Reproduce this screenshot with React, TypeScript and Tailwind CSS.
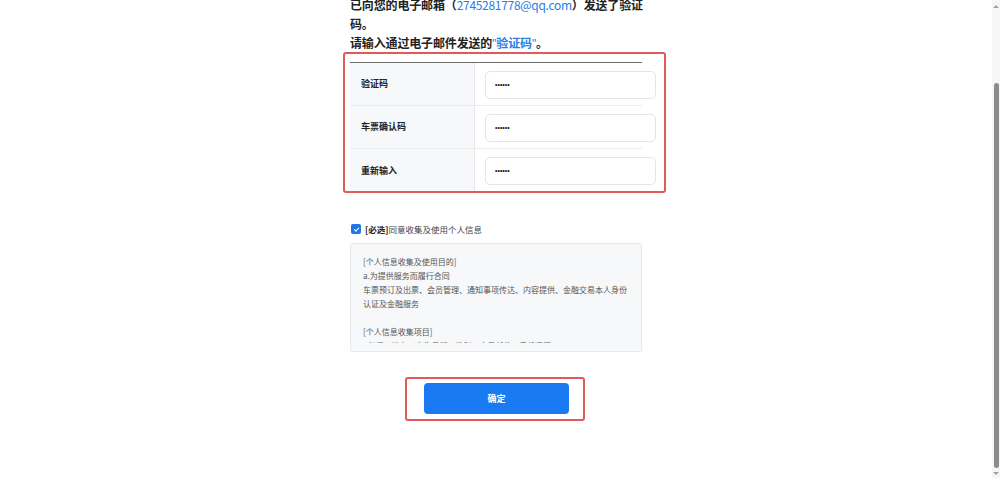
import React from "react";

const font = { fontFamily: '"Noto Sans CJK SC", "Noto Sans", sans-serif' };
const latin = { fontFamily: '"Liberation Sans", Arial, sans-serif' };

function Row({ label, last }: { label: string; last?: boolean }) {
  return (
    <div className={`flex h-[43px] ${last ? "" : "border-b border-[#ececec]"}`}>
      <div className="w-[125px] shrink-0 bg-[#f7f8fa] border-r border-[#e6e8eb] flex items-center pl-[11px] text-[9px] font-bold text-[#222]">
        {label}
      </div>
      <div className="flex-1 pl-[10px] pt-[8px]">
        <div className="w-[171px] h-[28px] rounded-[5px] border border-[#e3e5e8] bg-white flex items-center pl-[9px] text-[7px] font-bold text-[#222]" style={latin}>
          ••••••
        </div>
      </div>
    </div>
  );
}

export default function App() {
  return (
    <div className="h-screen w-full overflow-hidden flex bg-white" style={font}>
      <div className="flex-1 overflow-hidden">
        <div className="w-[292px] mx-auto -mt-[5px]">
          <div className="text-[12px] leading-[19px] font-bold text-[#222] whitespace-nowrap tracking-[-0.15px]">
            已向您的电子邮箱（<span className="text-[#2a7de1] font-normal tracking-[-0.3px]">2745281778@qq.com</span>）发送了验证
            <br />
            码。
            <br />
            请输入通过电子邮件发送的
            <span className="text-[#2a7de1]">
              <span style={latin} className="font-normal">"</span>验证码<span style={latin} className="font-normal">"</span>
            </span>
            。
          </div>

          <div className="relative mt-[8px]">
            <div className="absolute -left-[7px] -top-[10px] w-[323px] h-[141px] border-2 border-[#e05a5a] rounded-[3px] pointer-events-none" />
            <div className="border-t border-[#6b6b6b]">
              <Row label="验证码" />
              <Row label="车票确认码" />
              <Row label="重新输入" last />
            </div>
          </div>

          <div className="mt-[31px] flex items-center h-[12px]">
            <div className="w-[10px] h-[10px] ml-[1px] rounded-[2px] bg-[#1f74e6] flex items-center justify-center">
              <svg width="7" height="7" viewBox="0 0 10 10">
                <path d="M2 5.2 L4.2 7.3 L8 3" stroke="white" strokeWidth="1.6" fill="none" strokeLinecap="round" strokeLinejoin="round" />
              </svg>
            </div>
            <span className="ml-[4px] text-[8.5px] text-[#444]">
              <span className="font-bold text-[#222]">[必选]</span>同意收集及使用个人信息
            </span>
          </div>

          <div className="mt-[8px] h-[109px] rounded-[3px] border border-[#e6e8eb] bg-[#f7f8fa] pt-[11px] pl-[12px] pr-[12px]">
            <div className="flex h-[88px] overflow-hidden">
              <div className="flex-1 text-[8px] leading-[14px] text-[#555] whitespace-nowrap">
                <div>[个人信息收集及使用目的]</div>
                <div>a.为提供服务而履行合同</div>
                <div>车票预订及出票、会员管理、通知事项传达、内容提供、金融交易本人身份</div>
                <div>认证及金融服务</div>
                <div>&nbsp;</div>
                <div>[个人信息收集项目]</div>
                <div>- 必须：姓名、出生日期、性别、电子邮件、手机号码</div>
              </div>
              <div className="w-[4px] ml-[2px] h-[86px] bg-[#f0f1f3] rounded-[2px]">
                <div className="h-[16px] w-[3px] bg-[#9a9a9a] rounded-[2px] mt-[1px]" />
              </div>
            </div>
          </div>

          <div className="relative mt-[31px] flex justify-center">
            <div className="absolute left-[55px] -top-[6px] w-[180px] h-[44px] border-2 border-[#e05a5a] rounded-[3px] pointer-events-none" />
            <button className="w-[145px] h-[31px] ml-[1px] rounded-[4px] bg-[#1a7af2] text-white text-[9px] font-bold">
              确定
            </button>
          </div>
        </div>
      </div>

      <div className="w-[8px] h-full bg-[#f6f6f6] flex flex-col items-center">
        <div className="h-[12px] flex items-center justify-center">
          <div className="w-0 h-0 border-l-[3px] border-r-[3px] border-b-[3px] border-l-transparent border-r-transparent border-b-[#a0a0a0]" />
        </div>
        <div className="mt-[71px] h-[385px] w-[5px] rounded-[3px] bg-[#8c8c8c]" />
        <div className="flex-1 flex items-center justify-center">
          <div className="w-0 h-0 border-l-[3px] border-r-[3px] border-t-[3px] border-l-transparent border-r-transparent border-t-[#a0a0a0]" />
        </div>
      </div>
    </div>
  );
}
